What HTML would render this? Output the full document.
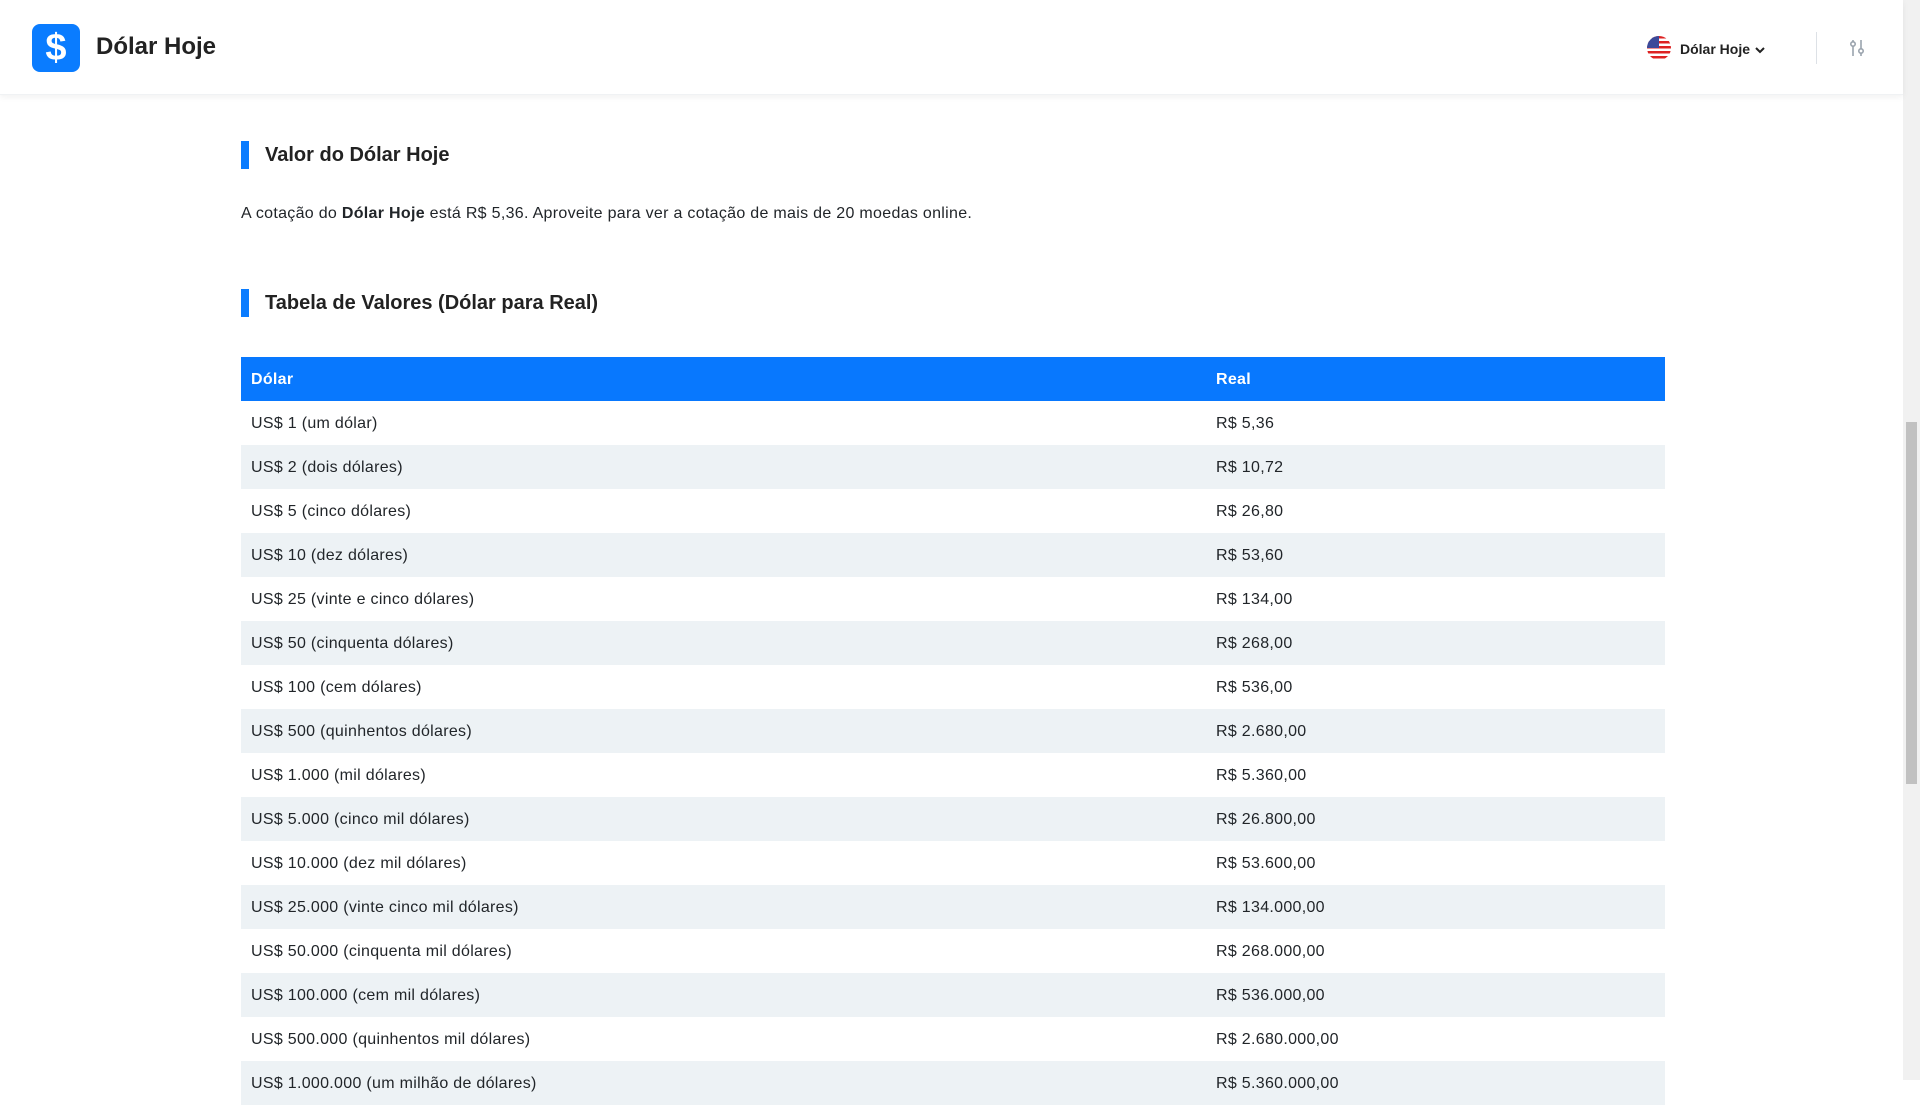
<!DOCTYPE html>
<html><head><meta charset="utf-8"><style>
*{box-sizing:border-box;margin:0;padding:0}
body{width:1920px;height:1080px;overflow:hidden;background:#fff;font-family:"Liberation Sans",sans-serif;color:#212529;position:relative}
.hdr{position:absolute;left:0;top:0;width:1903px;height:95px;background:#fff;box-shadow:0 2px 6px rgba(0,0,0,.06);border-bottom:1px solid #f0f2f4;z-index:2}
.logo{position:absolute;left:32px;top:24px;width:48px;height:48px;background:#0a7cff;border-radius:8px;color:#fff;font-weight:bold;font-size:38px;text-align:center;line-height:48px}
.title{position:absolute;left:96px;top:33px;font-size:24px;font-weight:bold;color:#222}
.flag{position:absolute;left:1647px;top:36px;width:24px;height:24px;border-radius:50%;overflow:hidden;background:repeating-linear-gradient(#d22 0 2.5px,#fff 2.5px 5px)}
.flag:after{content:"";position:absolute;left:0;top:0;width:12px;height:12px;background:#3b4a9a}
.lang{position:absolute;left:1680px;top:41px;font-size:14px;font-weight:bold;color:#222}
.div{position:absolute;left:1816px;top:32px;width:1px;height:32px;background:#dde1e6}
.sb{position:absolute;left:1903px;top:0;width:17px;height:1080px;background:#f1f1f1}
.thumb{position:absolute;left:1906px;top:422px;width:11px;height:362px;background:#c1c1c1}
h2{position:absolute;left:241px;font-size:20px;font-weight:bold;color:#222;padding-left:24px;line-height:28px}
h2:before{content:"";position:absolute;left:0;top:0;width:8px;height:28px;background:#0a7cff}
p{position:absolute;left:241px;top:205px;font-size:16px;letter-spacing:.3px}
table{position:absolute;left:241px;top:357px;width:1424px;border-collapse:collapse;font-size:16px;letter-spacing:.3px}
th{background:#0878fe;color:#fff;text-align:left;height:44px;padding:2px 10px 0;font-weight:bold}
td{height:44px;padding:2px 10px 0}
tr:nth-child(odd) td{background:#edf2f5}
</style></head><body>
<div class="hdr">
<div class="logo">$</div><div class="title">Dólar Hoje</div>
<div class="flag"></div><div class="lang">Dólar Hoje <svg width="12" height="10" viewBox="0 0 12 10" style="vertical-align:middle"><path d="M2 3l4 4 4-4" stroke="#222" stroke-width="2" fill="none"/></svg></div>
<div class="div"></div>
<svg style="position:absolute;left:1849px;top:39px" width="16" height="18" viewBox="0 0 16 18"><g stroke="#9aa3ad" stroke-width="1.6" fill="none"><line x1="4" y1="1" x2="4" y2="17"/><line x1="12" y1="1" x2="12" y2="17"/><circle cx="4" cy="5" r="2.2" fill="#fff"/><circle cx="12" cy="12" r="2.2" fill="#fff"/></g></svg>
</div>
<div class="sb"></div><div class="thumb"></div>
<h2 style="top:141px">Valor do Dólar Hoje</h2>
<p>A cotação do <b>Dólar Hoje</b> está R$ 5,36. Aproveite para ver a cotação de mais de 20 moedas online.</p>
<h2 style="top:289px">Tabela de Valores (Dólar para Real)</h2>
<table>
<tr><th style="width:965px">Dólar</th><th>Real</th></tr>
<tr><td>US$ 1 (um dólar)</td><td>R$ 5,36</td></tr>
<tr><td>US$ 2 (dois dólares)</td><td>R$ 10,72</td></tr>
<tr><td>US$ 5 (cinco dólares)</td><td>R$ 26,80</td></tr>
<tr><td>US$ 10 (dez dólares)</td><td>R$ 53,60</td></tr>
<tr><td>US$ 25 (vinte e cinco dólares)</td><td>R$ 134,00</td></tr>
<tr><td>US$ 50 (cinquenta dólares)</td><td>R$ 268,00</td></tr>
<tr><td>US$ 100 (cem dólares)</td><td>R$ 536,00</td></tr>
<tr><td>US$ 500 (quinhentos dólares)</td><td>R$ 2.680,00</td></tr>
<tr><td>US$ 1.000 (mil dólares)</td><td>R$ 5.360,00</td></tr>
<tr><td>US$ 5.000 (cinco mil dólares)</td><td>R$ 26.800,00</td></tr>
<tr><td>US$ 10.000 (dez mil dólares)</td><td>R$ 53.600,00</td></tr>
<tr><td>US$ 25.000 (vinte cinco mil dólares)</td><td>R$ 134.000,00</td></tr>
<tr><td>US$ 50.000 (cinquenta mil dólares)</td><td>R$ 268.000,00</td></tr>
<tr><td>US$ 100.000 (cem mil dólares)</td><td>R$ 536.000,00</td></tr>
<tr><td>US$ 500.000 (quinhentos mil dólares)</td><td>R$ 2.680.000,00</td></tr>
<tr><td>US$ 1.000.000 (um milhão de dólares)</td><td>R$ 5.360.000,00</td></tr>
</table>
</body></html>
